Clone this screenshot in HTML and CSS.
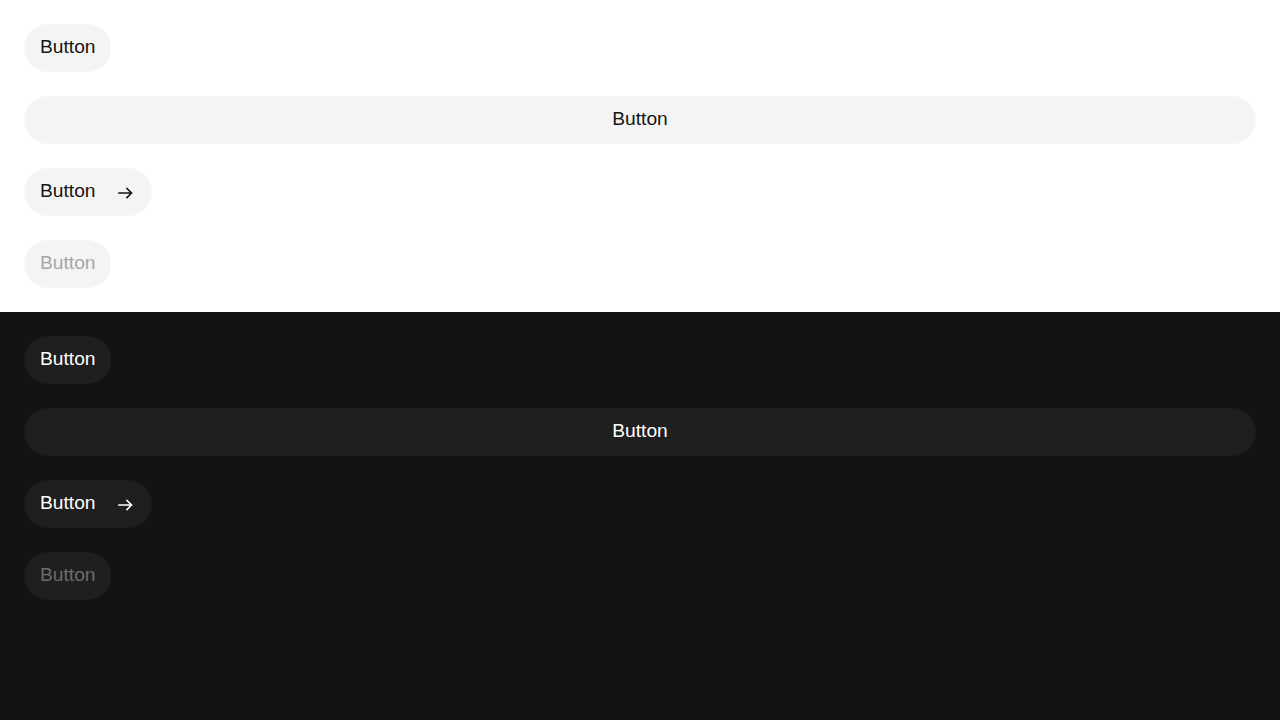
FILE: index.html
```html
<!DOCTYPE html>
<html lang="en">
<head>
<meta charset="utf-8">
<title>Buttons</title>
<link rel="stylesheet" href="styles.css">
</head>
<body>
<section class="panel panel--light">
  <button class="btn">Button</button>
  <button class="btn btn--block">Button</button>
  <button class="btn btn--icon">Button
    <svg class="btn__icon" width="24" height="24" viewBox="0 0 24 24" fill="none" stroke="currentColor" stroke-width="1.6" stroke-linecap="square"><path d="M7 13h12.5M15 8.5l4.5 4.5-4.5 4.5"/></svg>
  </button>
  <button class="btn" disabled>Button</button>
</section>
<section class="panel panel--dark">
  <button class="btn">Button</button>
  <button class="btn btn--block">Button</button>
  <button class="btn btn--icon">Button
    <svg class="btn__icon" width="24" height="24" viewBox="0 0 24 24" fill="none" stroke="currentColor" stroke-width="1.6" stroke-linecap="square"><path d="M7 13h12.5M15 8.5l4.5 4.5-4.5 4.5"/></svg>
  </button>
  <button class="btn" disabled>Button</button>
</section>
</body>
</html>
```
FILE: styles.css
```css
html, body {
  margin: 0;
  padding: 0;
  background: #131313;
  min-height: 100%;
}
body {
  font-family: "Liberation Sans", Arial, sans-serif;
  min-height: 720px;
}
.panel {
  display: flex;
  flex-direction: column;
  align-items: flex-start;
  gap: 24px;
  padding: 24px;
}
.panel--light {
  background: #ffffff;
}
.panel--dark {
  background: #131313;
}
.btn {
  display: inline-flex;
  align-items: center;
  justify-content: center;
  gap: 17px;
  box-sizing: border-box;
  height: 48px;
  padding: 0 16px 2px;
  border: 0;
  border-radius: 24px;
  font-family: inherit;
  font-size: 19.2px;
  line-height: 1;
  cursor: pointer;
}
.btn--block {
  align-self: stretch;
}
.btn__icon {
  display: block;
  flex: none;
  margin-top: 2px;
}
.panel--light .btn {
  background: #f4f4f4;
  color: #141414;
}
.panel--dark .btn {
  background: #1f1f1f;
  color: #ffffff;
}
.panel--light .btn:disabled {
  color: #a6a6a6;
  cursor: default;
}
.panel--dark .btn:disabled {
  color: #6b6b6b;
  cursor: default;
}
```
